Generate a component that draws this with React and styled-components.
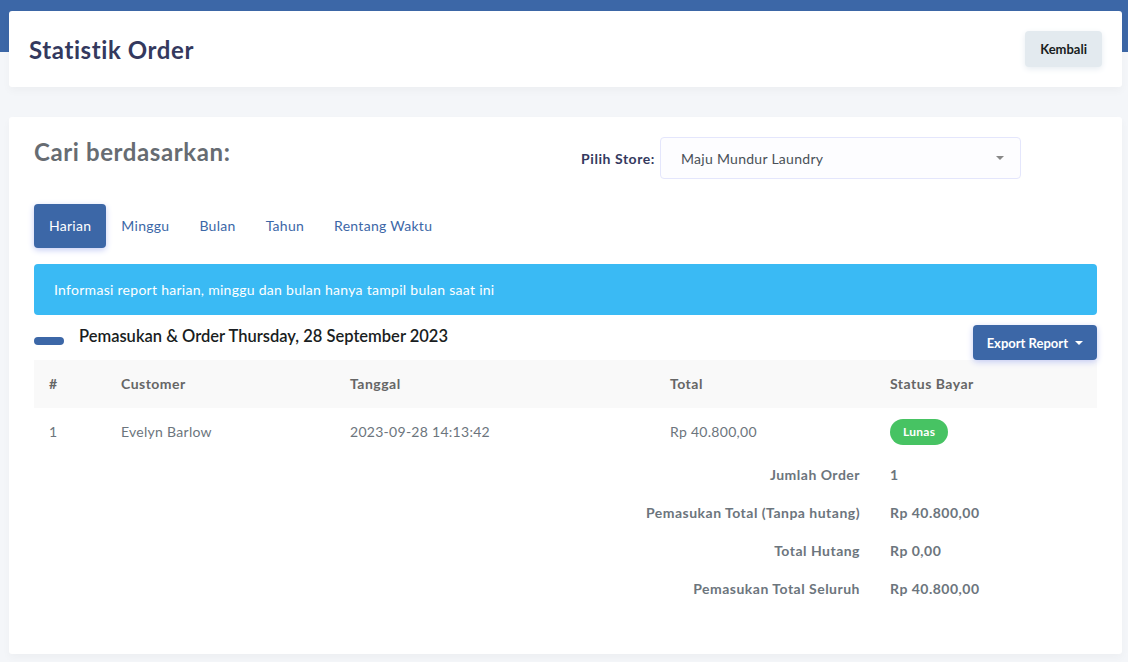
import React from 'react';
import styled, { createGlobalStyle } from 'styled-components';

const GlobalStyle = createGlobalStyle`
  * { box-sizing: border-box; }
  body {
    margin: 0;
    background: #f4f6f9;
    font-family: Lato, "Open Sans", sans-serif;
    font-size: 14px;
    letter-spacing: 0.02em;
    color: #6c757d;
  }
`;

const Page = styled.div`
  position: relative;
  min-height: 662px;
  padding: 11px 6px 8px 9px;
  background: linear-gradient(#3c67a7 0, #3c67a7 52px, #f4f6f9 52px);
`;

const Card = styled.div`
  background: #fff;
  border-radius: 3px;
  box-shadow: 0 4px 8px rgba(0, 0, 0, 0.03);
`;

const HeaderCard = styled(Card)`
  height: 76px;
  display: flex;
  align-items: center;
  justify-content: space-between;
  padding: 0 20px 0 20px;
`;

const PageTitle = styled.h1`
  margin: 0;
  font-size: 24px;
  font-weight: 700;
  letter-spacing: 0.025em;
  color: #34395e;
`;

const Button = styled.button`
  border: 0;
  border-radius: 4px;
  font-family: inherit;
  font-size: 13px;
  font-weight: 700;
  letter-spacing: 0;
  padding: 0 ${p => (p.$primary ? 14 : 15)}px;
  height: ${p => p.$h || 36}px;
  background: ${p => (p.$primary ? '#3c67a7' : '#e3eaef')};
  color: ${p => (p.$primary ? '#fff' : '#191d21')};
  box-shadow: ${p => (p.$primary ? '0 2px 6px #c5ccf4' : '0 2px 6px #e6ecf1')};
  display: inline-flex;
  align-items: center;
  gap: 7px;
`;

const Caret = styled.span`
  display: inline-block;
  width: 0;
  height: 0;
  border-left: 4px solid transparent;
  border-right: 4px solid transparent;
  border-top: 4px solid ${p => p.$color || 'currentColor'};
`;

const MainCard = styled(Card)`
  margin-top: 30px;
  padding: 20px 25px 46px 25px;
`;

const TopRow = styled.div`
  display: flex;
  align-items: flex-start;
`;

const SearchTitle = styled.h2`
  flex: 1;
  margin: 0;
  font-size: 24px;
  line-height: 30px;
  font-weight: 700;
  letter-spacing: 0.025em;
  color: #676c72;
`;

const StoreField = styled.div`
  display: flex;
  align-items: center;
  gap: 5px;
  margin-right: 76px;
`;

const Label = styled.label`
  font-size: 14px;
  font-weight: 700;
  letter-spacing: 0.04em;
  color: #34395e;
`;

const Select = styled.div`
  width: 361px;
  height: 42px;
  display: flex;
  align-items: center;
  justify-content: space-between;
  padding: 0 16px 0 20px;
  background: #fdfdff;
  border: 1px solid #e4e6fc;
  border-radius: 4px;
  color: #495057;
  font-size: 14px;
`;

const Tabs = styled.div`
  display: flex;
  margin-top: 25px;
`;

const Tab = styled.div`
  height: 44px;
  line-height: 44px;
  padding: 0 15px;
  border-radius: 4px;
  font-size: 14px;
  color: ${p => (p.$active ? '#fff' : '#3c67a7')};
  background: ${p => (p.$active ? '#3c67a7' : 'transparent')};
  box-shadow: ${p => (p.$active ? '0 2px 6px #c5ccf4' : 'none')};
`;

const Alert = styled.div`
  margin-top: 16px;
  height: 51px;
  display: flex;
  align-items: center;
  padding: 0 20px;
  background: #3abaf4;
  color: #fff;
  border-radius: 4px;
  font-size: 14px;
`;

const SectionHead = styled.div`
  margin-top: 10px;
  display: flex;
  align-items: flex-start;
  justify-content: space-between;
`;

const SectionTitle = styled.div`
  display: flex;
  align-items: flex-start;
  font-size: 16.5px;
  line-height: 23px;
  font-weight: 600;
  letter-spacing: 0;
  color: #191d21;
  &::before {
    content: '';
    width: 30px;
    height: 8px;
    margin-top: 12px;
    margin-right: 15px;
    border-radius: 5px;
    background: #3c67a7;
  }
`;

const Table = styled.table`
  width: 100%;
  border-collapse: collapse;
  font-size: 14px;
`;

const Th = styled.th`
  height: 48px;
  padding: 0 15px 1px;
  text-align: left;
  font-weight: 700;
  letter-spacing: 0.035em;
  color: #666;
  background: #f9f9f9;
  width: ${p => p.$w || 'auto'};
`;

const Td = styled.td`
  height: ${p => (p.$summary ? 38 : 48)}px;
  padding: 0 15px 1px;
  text-align: ${p => (p.$right ? 'right' : 'left')};
  font-weight: ${p => (p.$bold ? 700 : 400)};
  letter-spacing: ${p => (p.$bold ? '0.035em' : '0.02em')};
  color: #6c757d;
`;

const Badge = styled.span`
  display: inline-block;
  padding: 0 13px;
  height: 26px;
  line-height: 26px;
  border-radius: 30px;
  background: #47c363;
  color: #fff;
  font-size: 12px;
  font-weight: 700;
`;

const tabs = ['Harian', 'Minggu', 'Bulan', 'Tahun', 'Rentang Waktu'];

const summary = [
  ['Jumlah Order', '1'],
  ['Pemasukan Total (Tanpa hutang)', 'Rp 40.800,00'],
  ['Total Hutang', 'Rp 0,00'],
  ['Pemasukan Total Seluruh', 'Rp 40.800,00'],
];

export default function App() {
  return (
    <>
      <GlobalStyle />
      <Page>
        <HeaderCard>
          <PageTitle>Statistik Order</PageTitle>
          <Button>Kembali</Button>
        </HeaderCard>

        <MainCard>
          <TopRow>
            <SearchTitle>Cari berdasarkan:</SearchTitle>
            <StoreField>
              <Label>Pilih Store:</Label>
              <Select>
                <span>Maju Mundur Laundry</span>
                <Caret $color="#888" />
              </Select>
            </StoreField>
          </TopRow>

          <Tabs>
            {tabs.map((t, i) => (
              <Tab key={t} $active={i === 0}>{t}</Tab>
            ))}
          </Tabs>

          <Alert>Informasi report harian, minggu dan bulan hanya tampil bulan saat ini</Alert>

          <SectionHead>
            <SectionTitle>Pemasukan &amp; Order Thursday, 28 September 2023</SectionTitle>
            <Button $primary $h={35}>Export Report <Caret /></Button>
          </SectionHead>

          <Table>
            <thead>
              <tr>
                <Th $w="72px">#</Th>
                <Th $w="229px">Customer</Th>
                <Th $w="320px">Tanggal</Th>
                <Th $w="220px">Total</Th>
                <Th>Status Bayar</Th>
              </tr>
            </thead>
            <tbody>
              <tr>
                <Td>1</Td>
                <Td>Evelyn Barlow</Td>
                <Td>2023-09-28 14:13:42</Td>
                <Td>Rp 40.800,00</Td>
                <Td><Badge>Lunas</Badge></Td>
              </tr>
              {summary.map(([k, v]) => (
                <tr key={k}>
                  <Td $summary $bold $right colSpan={4}>{k}</Td>
                  <Td $summary $bold>{v}</Td>
                </tr>
              ))}
            </tbody>
          </Table>
        </MainCard>
      </Page>
    </>
  );
}
